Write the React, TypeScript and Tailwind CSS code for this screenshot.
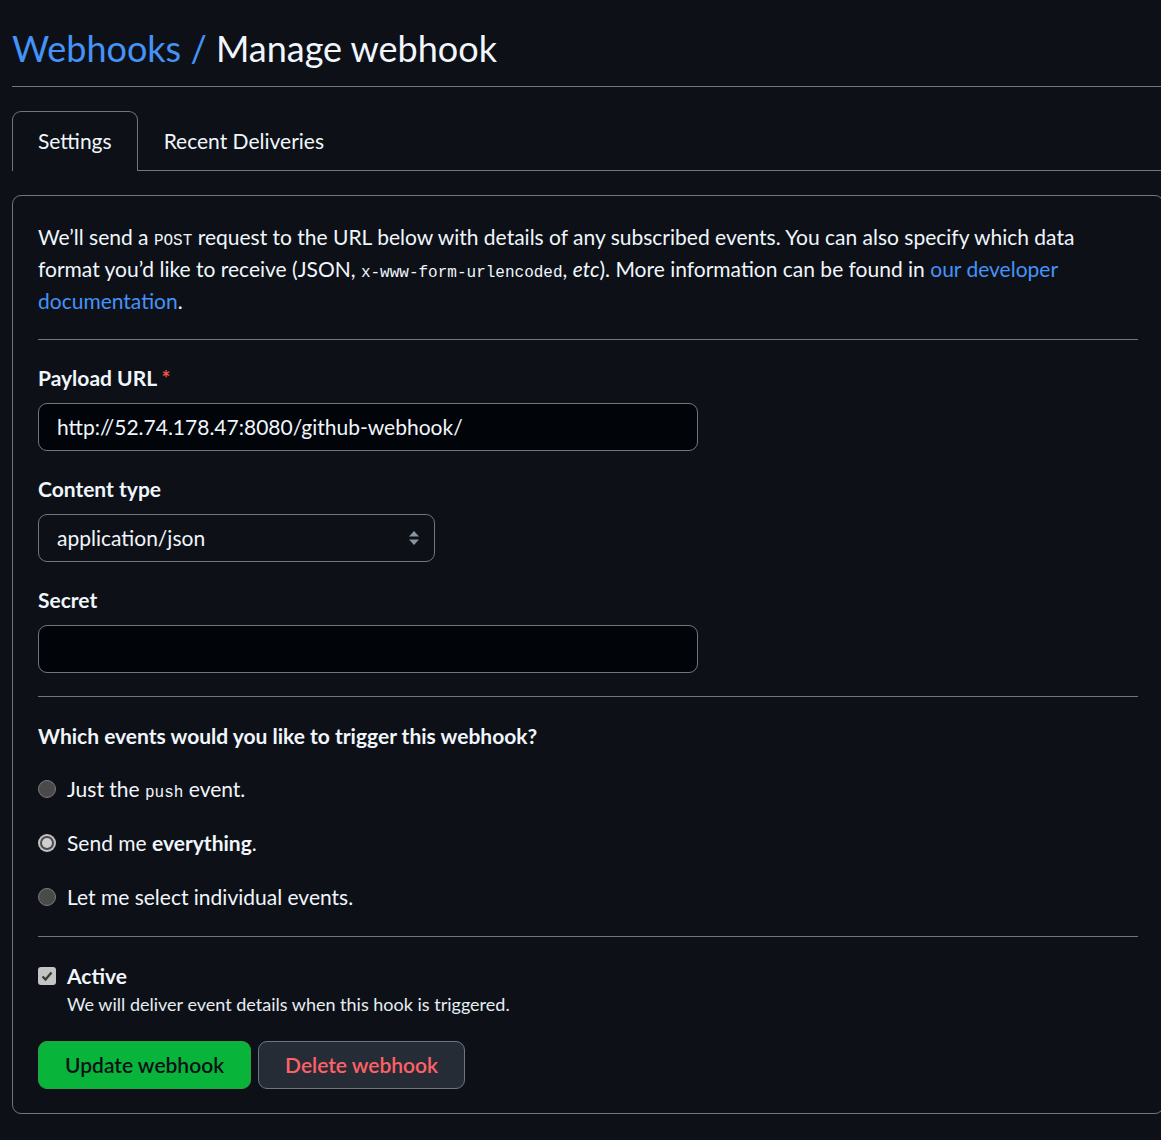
import React from "react";

const line = "border-[#6e7681]";
const mono = "font-['Liberation_Mono',monospace] text-[16px] leading-none";

function Radio({ checked }: { checked?: boolean }) {
    if (checked) {
        return (
            <span className="flex h-[18px] w-[18px] shrink-0 items-center justify-center rounded-full bg-[#c2c2c2]">
                <span className="flex h-[14px] w-[14px] items-center justify-center rounded-full bg-[#4a4a4a]">
                    <span className="h-[10px] w-[10px] rounded-full bg-[#cfcfcf]" />
                </span>
            </span>
        );
    }
    return <span className="h-[18px] w-[18px] shrink-0 rounded-full border border-[#7a7a7a] bg-[#4a4a4a]" />;
}

function Label({ children }: { children: React.ReactNode }) {
    return <div className="text-[21px] font-bold leading-[32px]">{children}</div>;
}

export default function App() {
    return (
        <div className="min-h-[1140px] w-[1161px] overflow-hidden bg-[#0d1117] font-['Lato','Noto_Sans',sans-serif] text-[#f0f6fc]">
            <div className="ml-[12px] w-[1152px]">
                {/* header */}
                <h1 className={`border-b ${line} pb-[11px] pt-[21px] text-[36px] leading-[54px]`}>
                    <span className="text-[#4493f8]">Webhooks / </span>
                    <span>Manage webhook</span>
                </h1>

                {/* tabs */}
                <nav className={`mt-[24px] flex border-b ${line} text-[21px] leading-[31px]`}>
                    <div className={`-mb-px rounded-t-[9px] border border-b-0 ${line} bg-[#0d1117] px-[25px] pb-[14px] pt-[13px]`}>
                        Settings
                    </div>
                    <div className="px-[26px] pb-[14px] pt-[14px]">Recent Deliveries</div>
                </nav>

                {/* settings panel */}
                <div className={`mt-[24px] rounded-[9px] border ${line} px-[25px] pb-[24px] pt-[25px]`}>
                    <p className="text-[21px] leading-[32px]">
                        We’ll send a <code className={mono}>POST</code> request to the URL below with details of any subscribed
                        events. You can also specify which data format you’d like to receive (JSON,{" "}
                        <code className={mono}>x-www-form-urlencoded</code>, <em>etc</em>). More information can be found in{" "}
                        <span className="text-[#4493f8]">our developer documentation</span>.
                    </p>

                    <hr className={`mt-[22px] ${line}`} />

                    <div className="mt-[22px]">
                        <Label>
                            Payload URL <span className="text-[#f85149]">*</span>
                        </Label>
                        <div className={`mt-[9px] flex h-[48px] w-[660px] items-center rounded-[9px] border ${line} bg-[#010409] px-[18px] text-[21px]`}>
                            http://52.74.178.47:8080/github-webhook/
                        </div>
                    </div>

                    <div className="mt-[22px]">
                        <Label>Content type</Label>
                        <div className={`mt-[9px] flex h-[48px] w-[397px] items-center justify-between rounded-[9px] border ${line} bg-[#0d1117] pl-[18px] pr-[14px] text-[21px]`}>
                            <span>application/json</span>
                            <svg width="12" height="16" viewBox="0 0 12 16" className="text-[#8b949e]">
                                <path d="M6 1 L11 6.5 H1 Z" fill="currentColor" />
                                <path d="M6 15 L11 9.5 H1 Z" fill="currentColor" />
                            </svg>
                        </div>
                    </div>

                    <div className="mt-[22px]">
                        <Label>Secret</Label>
                        <div className={`mt-[9px] h-[48px] w-[660px] rounded-[9px] border ${line} bg-[#010409]`} />
                    </div>

                    <hr className={`mt-[23px] ${line}`} />

                    <div className="mt-[23px]">
                        <Label>Which events would you like to trigger this webhook?</Label>
                        <div className="mt-[21px] flex flex-col gap-[22px] text-[21px] leading-[32px]">
                            <label className="flex h-[32px] items-center gap-[11px]">
                                <Radio />
                                <span>
                                    Just the <code className={mono}>push</code> event.
                                </span>
                            </label>
                            <label className="flex h-[32px] items-center gap-[11px]">
                                <Radio checked />
                                <span>
                                    Send me <strong className="font-bold">everything</strong>.
                                </span>
                            </label>
                            <label className="flex h-[32px] items-center gap-[11px]">
                                <Radio />
                                <span>Let me select individual events.</span>
                            </label>
                        </div>
                    </div>

                    <hr className={`mt-[23px] ${line}`} />

                    <div className="mt-[24px] flex gap-[11px]">
                        <span className="mt-[6px] flex h-[18px] w-[18px] shrink-0 items-center justify-center rounded-[3px] bg-[#c4c4c4]">
                            <svg width="14" height="14" viewBox="0 0 14 14">
                                <path d="M2.5 7.5 L5.5 10.5 L11.5 3.5" stroke="#3d3d3d" strokeWidth="2.4" fill="none" />
                            </svg>
                        </span>
                        <div>
                            <div className="text-[21px] font-bold leading-[30px]">Active</div>
                            <div className="text-[18px] leading-[27px] text-[#e6edf3]">
                                We will deliver event details when this hook is triggered.
                            </div>
                        </div>
                    </div>

                    <div className="mt-[23px] flex gap-[7px] text-[21px] font-semibold">
                        <button className="h-[48px] rounded-[9px] border border-[#2ea043] bg-[#08b43a] px-[26px] text-[#0d1117]">
                            Update webhook
                        </button>
                        <button className="h-[48px] rounded-[9px] border border-[#6e7681] bg-[#262c36] px-[26px] text-[#ff6166]">
                            Delete webhook
                        </button>
                    </div>
                </div>
            </div>
        </div>
    );
}
